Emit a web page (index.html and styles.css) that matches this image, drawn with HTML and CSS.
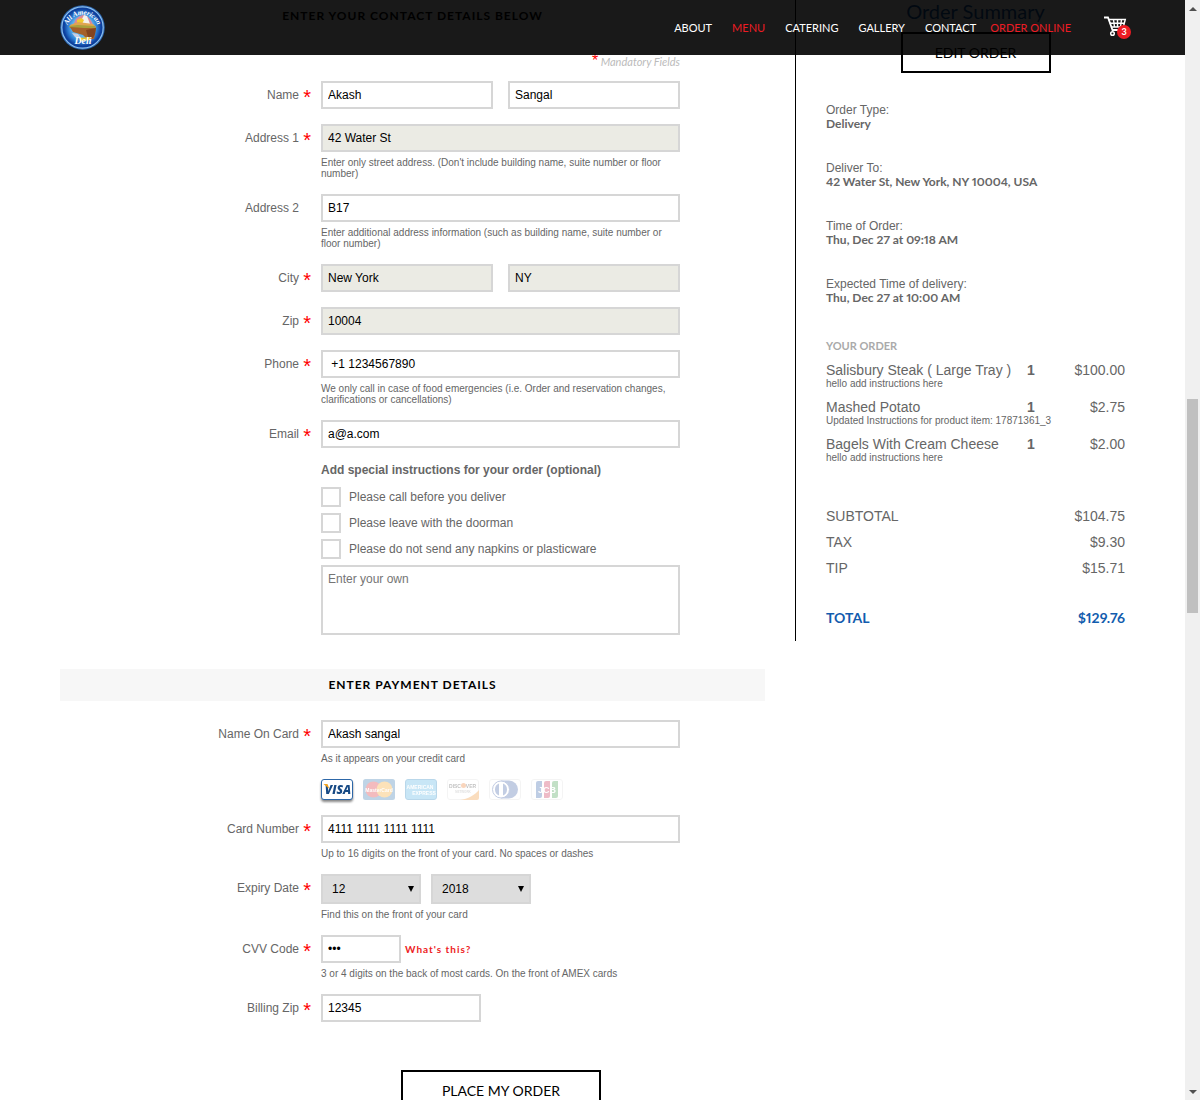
FILE: index.html
```html
<!DOCTYPE html>
<html lang="en">
<head>
<meta charset="utf-8">
<meta name="viewport" content="width=device-width, initial-scale=1">
<title>All American Deli - Checkout</title>
<link rel="stylesheet" href="styles.css">
</head>
<body>
<div class="window">
  <header class="topbar">
    <a class="logo" href="#" aria-label="All American Deli">
      <svg width="45" height="45" viewBox="0 0 45 45">
        <defs>
          <path id="arc-top" d="M7 25a15.500 15.500 0 0 1 31 0"/>
          <radialGradient id="ring"><stop offset=".5" stop-color="#5fb4ee"/><stop offset=".72" stop-color="#2a78cf"/><stop offset=".9" stop-color="#0d3f9c"/></radialGradient>
        </defs>
        <circle cx="22.500" cy="22.500" r="22.300" fill="#2b64ad"/>
        <circle cx="22.500" cy="22.500" r="20.700" fill="url(#ring)" stroke="#8cc0ee" stroke-width="1.200"/>
        <path d="M14 19c1-6 5-8 9-9 4 0 8 4 10 10z" fill="#d9899a"/>
        <path d="M21 16l3-6 3 1 3 8h-8z" fill="#f4f2ec"/>
        <path d="M17 15l4-2 3 2-2 4-5-1z" fill="#efc92f"/>
        <path d="M10 20l8-3 15 2 3 3-25 1z" fill="#e0a550"/>
        <path d="M9 21l9-1 17 1 1 2-12 1-14-1z" fill="#a8a03c"/>
        <path d="M10 22l14 1 12 0-1 6-1 5-7 0-4-4-10-3z" fill="#a5602b"/>
        <path d="M26 25l10-2-1 6-2 4-5-1z" fill="#84441f"/>
        <path d="M12 28l6 1 3 4-6-1z" fill="#c9cfe4"/>
        <path d="M19 33l11-1v3l-10 1z" fill="#e6c22c"/>
        <text class="logo-arc"><textPath href="#arc-top" startOffset="50%" text-anchor="middle">All American</textPath></text>
        <text class="logo-deli" x="23" y="39" text-anchor="middle">Deli</text>
      </svg>
    </a>
    <nav class="nav">
      <a href="#">ABOUT</a>
      <a class="active" href="#">MENU</a>
      <a href="#">CATERING</a>
      <a href="#">GALLERY</a>
      <a href="#">CONTACT</a>
      <a class="active order-online" href="#">ORDER ONLINE</a>
    </nav>
    <a class="cart" href="#" aria-label="Cart">
      <svg width="23" height="21" viewBox="0 0 23 21" fill="none" stroke="#fff">
        <path d="M0 1.500h4l4.500 12.500h11" stroke-width="1.800"/>
        <path d="M4.800 3.500h16.500l-2 7.500h-12M5.800 7.200h14.500" stroke-width="1.400"/>
        <path d="M9.500 3.500l1 7.500M13.500 3.500v7.500M17.500 3.500l-1 7.500" stroke-width="1.400"/>
        <circle cx="8.500" cy="17.500" r="1.800" stroke-width="1.500"/>
        <circle cx="17.500" cy="17.500" r="1.800" stroke-width="1.500"/>
      </svg>
      <span class="cart-count">3</span>
    </a>
  </header>

  <div class="page">
    <main class="checkout">
      <form>
        <h2 class="bar">ENTER YOUR CONTACT DETAILS BELOW</h2>
        <p class="mandatory"><span class="star">*</span> Mandatory Fields</p>
        <div class="rows">
          <div class="row">
            <label class="label" for="first">Name<span class="req">*</span></label>
            <div class="field pair">
              <input class="text" id="first" type="text" value="Akash">
              <input class="text" aria-label="Last name" type="text" value="Sangal">
            </div>
          </div>
          <div class="row">
            <label class="label" for="addr1">Address 1<span class="req">*</span></label>
            <div class="field">
              <input class="text locked" id="addr1" type="text" value="42 Water St" readonly>
              <p class="help">Enter only street address. (Don't include building name, suite number or floor number)</p>
            </div>
          </div>
          <div class="row">
            <label class="label" for="addr2">Address 2<span class="req"></span></label>
            <div class="field">
              <input class="text" id="addr2" type="text" value="B17">
              <p class="help">Enter additional address information (such as building name, suite number or floor number)</p>
            </div>
          </div>
          <div class="row">
            <label class="label" for="city">City<span class="req">*</span></label>
            <div class="field pair">
              <input class="text locked" id="city" type="text" value="New York" readonly>
              <input class="text locked" aria-label="State" type="text" value="NY" readonly>
            </div>
          </div>
          <div class="row">
            <label class="label" for="zip">Zip<span class="req">*</span></label>
            <div class="field"><input class="text locked" id="zip" type="text" value="10004" readonly></div>
          </div>
          <div class="row">
            <label class="label" for="phone">Phone<span class="req">*</span></label>
            <div class="field">
              <input class="text" id="phone" type="text" value=" +1 1234567890">
              <p class="help">We only call in case of food emergencies (i.e. Order and reservation changes, clarifications or cancellations)</p>
            </div>
          </div>
          <div class="row">
            <label class="label" for="email">Email<span class="req">*</span></label>
            <div class="field"><input class="text" id="email" type="text" value="a@a.com"></div>
          </div>
          <div class="row">
            <fieldset class="field extras">
              <legend>Add special instructions for your order (optional)</legend>
              <label class="check"><input type="checkbox">Please call before you deliver</label>
              <label class="check"><input type="checkbox">Please leave with the doorman</label>
              <label class="check"><input type="checkbox">Please do not send any napkins or plasticware</label>
              <textarea aria-label="Special instructions" placeholder="Enter your own"></textarea>
            </fieldset>
          </div>
        </div>

        <h2 class="bar payment">ENTER PAYMENT DETAILS</h2>
        <div class="rows">
          <div class="row">
            <label class="label" for="holder">Name On Card<span class="req">*</span></label>
            <div class="field">
              <input class="text" id="holder" type="text" value="Akash sangal">
              <p class="help">As it appears on your credit card</p>
            </div>
          </div>
          <div class="row">
            <div class="field cards">
              <svg class="card selected" viewBox="0 0 32 21" role="img" aria-label="Visa">
                <rect x=".5" y=".5" width="31" height="20" rx="2.500" fill="#fff" stroke="#2d67a8"/>
                <text class="visa" x="17" y="15" text-anchor="middle">VISA</text>
                <path d="M2.500 5h4l2 5z" fill="#f2a31f"/>
              </svg>
              <svg class="card" viewBox="0 0 32 21" role="img" aria-label="MasterCard">
                <rect width="32" height="21" rx="2.500" fill="#2d75ad"/>
                <circle cx="10.500" cy="10.500" r="8" fill="#d8232a"/><circle cx="21.500" cy="10.500" r="8" fill="#f6a01a"/>
                <text class="tiny" x="16" y="12.500" text-anchor="middle">MasterCard</text>
              </svg>
              <svg class="card" viewBox="0 0 32 21" role="img" aria-label="American Express">
                <rect x=".5" y=".5" width="31" height="20" rx="2.500" fill="#4db0e4" stroke="#1b7dbd"/>
                <text class="tiny" x="15" y="10" text-anchor="middle">AMERICAN</text>
                <text class="tiny" x="19" y="16" text-anchor="middle">EXPRESS</text>
              </svg>
              <svg class="card" viewBox="0 0 32 21" role="img" aria-label="Discover">
                <rect x=".5" y=".5" width="31" height="20" rx="2.500" fill="#fff" stroke="#ddd"/>
                <path d="M13 21c8-1 15-5 19-10v8a2 2 0 0 1-2 2z" fill="#f0902b"/>
                <circle cx="16.500" cy="6.500" r="2.500" fill="#ee7624"/>
                <text class="tiny dark" x="8" y="8.500" text-anchor="middle">DISC</text>
                <text class="tiny dark" x="24" y="8.500" text-anchor="middle">VER</text>
                <text class="micro" x="16" y="14" text-anchor="middle">NETWORK</text>
              </svg>
              <svg class="card" viewBox="0 0 32 21" role="img" aria-label="Diners Club">
                <rect x=".5" y=".5" width="31" height="20" rx="2.500" fill="#fff" stroke="#ddd"/>
                <path d="M12 1.500h8a9 9 0 0 1 0 18h-8z" fill="#3a5ba6"/>
                <circle cx="12" cy="10.500" r="8.500" fill="#fff" stroke="#3a5ba6"/>
                <path d="M10 4.500a6.500 6.500 0 0 0 0 12zM14 4.500a6.500 6.500 0 0 1 0 12z" fill="#3a5ba6"/>
              </svg>
              <svg class="card" viewBox="0 0 32 21" role="img" aria-label="JCB">
                <rect x=".5" y=".5" width="31" height="20" rx="2.500" fill="#fff" stroke="#ddd"/>
                <path d="M7 2h4v15a2 2 0 0 1-2 2H5V4a2 2 0 0 1 2-2z" fill="#2b5ba9"/>
                <path d="M15 2h4v15a2 2 0 0 1-2 2h-4V4a2 2 0 0 1 2-2z" fill="#c9234a"/>
                <path d="M23 2h4v15a2 2 0 0 1-2 2h-4V4a2 2 0 0 1 2-2z" fill="#3a9a46"/>
                <text class="jcb" x="16" y="13.500" text-anchor="middle">JCB</text>
              </svg>
            </div>
          </div>
          <div class="row">
            <label class="label" for="number">Card Number<span class="req">*</span></label>
            <div class="field">
              <input class="text" id="number" type="text" value="4111 1111 1111 1111">
              <p class="help">Up to 16 digits on the front of your card. No spaces or dashes</p>
            </div>
          </div>
          <div class="row">
            <label class="label" for="month">Expiry Date<span class="req">*</span></label>
            <div class="field">
              <div class="expiry">
                <div class="select">
                  <select id="month"><option>12</option></select>
                  <svg class="arrow" width="6" height="6" viewBox="0 0 6 6"><path d="M0 0h6L3 6z"/></svg>
                </div>
                <div class="select">
                  <select aria-label="Expiry year"><option>2018</option></select>
                  <svg class="arrow" width="6" height="6" viewBox="0 0 6 6"><path d="M0 0h6L3 6z"/></svg>
                </div>
              </div>
              <p class="help">Find this on the front of your card</p>
            </div>
          </div>
          <div class="row">
            <label class="label" for="cvv">CVV Code<span class="req">*</span></label>
            <div class="field">
              <div class="cvv">
                <input class="text" id="cvv" type="password" value="123">
                <a href="#">What's this?</a>
              </div>
              <p class="help">3 or 4 digits on the back of most cards. On the front of AMEX cards</p>
            </div>
          </div>
          <div class="row">
            <label class="label" for="bzip">Billing Zip<span class="req">*</span></label>
            <div class="field"><input class="text short" id="bzip" type="text" value="12345"></div>
          </div>
        </div>
        <div class="submit"><button class="outline wide" type="button">PLACE MY ORDER</button></div>
      </form>
    </main>

    <aside class="summary">
      <h2>Order Summary</h2>
      <button class="outline" type="button">EDIT ORDER</button>
      <dl class="facts">
        <div><dt>Order Type:</dt><dd>Delivery</dd></div>
        <div><dt>Deliver To:</dt><dd>42 Water St, New York, NY 10004, USA</dd></div>
        <div><dt>Time of Order:</dt><dd>Thu, Dec 27 at 09:18 AM</dd></div>
        <div><dt>Expected Time of delivery:</dt><dd>Thu, Dec 27 at 10:00 AM</dd></div>
      </dl>
      <h3>YOUR ORDER</h3>
      <table class="items">
        <colgroup><col><col class="qty-col"><col class="price-col"></colgroup>
        <tbody>
          <tr><td>Salisbury Steak ( Large Tray )<small>hello add instructions here</small></td><td class="qty">1</td><td class="price">$100.00</td></tr>
          <tr><td>Mashed Potato<small>Updated Instructions for product item: 17871361_3</small></td><td class="qty">1</td><td class="price">$2.75</td></tr>
          <tr><td>Bagels With Cream Cheese<small>hello add instructions here</small></td><td class="qty">1</td><td class="price">$2.00</td></tr>
        </tbody>
      </table>
      <table class="totals">
        <tbody>
          <tr><th scope="row">SUBTOTAL</th><td>$104.75</td></tr>
          <tr><th scope="row">TAX</th><td>$9.30</td></tr>
          <tr><th scope="row">TIP</th><td>$15.71</td></tr>
        </tbody>
      </table>
      <p class="grand"><span>TOTAL</span><span>$129.76</span></p>
    </aside>
  </div>

  <div class="rail" aria-hidden="true">
    <svg width="8" height="4" viewBox="0 0 8 4"><path d="M0 4l4-4 4 4z" fill="#505050"/></svg>
    <span class="thumb"></span>
    <svg class="down" width="8" height="4" viewBox="0 0 8 4"><path d="M0 0l4 4 4-4z" fill="#505050"/></svg>
  </div>
</div>
</body>
</html>
```

FILE: styles.css
```css
* { box-sizing: border-box; }

body, h2, h3, p, dl, dd, fieldset { margin: 0; padding: 0; }

body {
  background: #fff;
  color: #666;
  font: 12px/14px "Liberation Sans", Arial, sans-serif;
}

a { text-decoration: none; }

/* Page, fixed header and scroll rail share one grid */
.window {
  display: grid;
  grid-template: 55px minmax(0, 1fr) / minmax(0, 1fr) 15px;
  height: 100vh;
}

.page {
  grid-area: 1 / 1 / 3 / 2;
  display: flex;
  align-items: flex-start;
  gap: 30px;
  padding: 0 60px;
  overflow-y: auto;
  scrollbar-width: none;
}

.topbar {
  grid-area: 1 / 1 / 2 / 2;
  z-index: 1;
  display: flex;
  align-items: center;
  padding: 0 54px 0 60px;
  background: rgba(0, 0, 0, .9);
}

.logo { margin-right: auto; height: 45px; }
.logo svg { display: block; }
.logo-arc { font: italic bold 7px "Liberation Serif", serif; fill: #fff; }
.logo-deli { font: italic bold 10px "Liberation Serif", serif; fill: #fff; }

.nav {
  display: flex;
  gap: 20px;
  font: 11px/14px Lato, sans-serif;
}
.nav a { color: #fff; }
.nav .active { color: #ed1c24; }
.nav .order-online { margin-left: -6px; }

.cart {
  position: relative;
  width: 27px;
  height: 23px;
  margin-left: 33px;
}
.cart svg { display: block; }
.cart-count {
  position: absolute;
  right: 0;
  bottom: 0;
  width: 14px;
  height: 14px;
  border-radius: 7px;
  background: #ed1c24;
  color: #fff;
  font: bold 9px/14px Lato, sans-serif;
  text-align: center;
}

/* Checkout form */
.checkout { flex: 1; min-width: 0; padding-bottom: 60px; }

.bar {
  background: #f7f7f7;
  color: #000;
  font: bold 12px/32px Lato, sans-serif;
  letter-spacing: 1px;
  text-align: center;
}
.payment { margin: 34px 0 19px; }

.mandatory {
  margin: 23px 85px 12px 0;
  color: #bbb;
  font: italic 11px/14px Lato, sans-serif;
  text-align: right;
}
.star { color: #f00; font: 16px/10px "Liberation Sans", Arial, sans-serif; }

.rows { display: grid; gap: 15px; padding-right: 85px; }

.row {
  display: grid;
  grid-template-columns: 251px minmax(0, 1fr);
  column-gap: 10px;
}
.field { grid-column: 2; min-width: 0; }

.label {
  display: flex;
  justify-content: flex-end;
  line-height: 28px;
}
.req {
  width: 12px;
  height: 28px;
  padding-top: 2px;
  color: #f00;
  font-size: 20px;
  line-height: 28px;
  text-align: right;
}

.text {
  display: block;
  width: 100%;
  height: 28px;
  padding: 0 5px;
  border: 2px solid #d6d6d6;
  border-radius: 0;
  background: #fff;
  color: #000;
  font: inherit;
}
.locked { background: #ebebe4; }
.short { width: 160px; }

.pair { display: grid; grid-template-columns: 1fr 1fr; gap: 15px; }

.help { margin-top: 5px; font-size: 10px; line-height: 11px; }

.extras { border: 0; }
.extras legend { padding: 0; margin-bottom: 10px; font-weight: bold; }

.check {
  display: flex;
  align-items: center;
  gap: 8px;
  margin-bottom: 6px;
}
.check input {
  appearance: none;
  width: 20px;
  height: 20px;
  margin: 0;
  border: 2px solid #d6d6d6;
  background: #fff;
}
.extras textarea {
  display: block;
  width: 100%;
  height: 70px;
  padding: 5px;
  border: 2px solid #d6d6d6;
  font: inherit;
  resize: none;
}

.cards { display: flex; gap: 10px; }
.card { width: 32px; height: 21px; opacity: .3; }
.selected { opacity: 1; overflow: visible; filter: drop-shadow(0 2px 1px #888); }
.card text { font-family: "Liberation Sans", Arial, sans-serif; font-weight: bold; }
.card .visa { font: italic 800 12px "Open Sans", sans-serif; fill: #174a85; }
.tiny { font-size: 5px; fill: #fff; }
.micro { font-size: 3px; fill: #999; }
.jcb { font-size: 9px; fill: #fff; }
.card .dark { fill: #333; }

.expiry { display: flex; gap: 10px; }
.select { position: relative; width: 100px; }
.select select {
  display: block;
  appearance: none;
  width: 100%;
  height: 30px;
  padding: 0 9px;
  border: 2px solid #d6d6d6;
  border-radius: 0;
  background: #ddd;
  color: #000;
  font: inherit;
}
.arrow { position: absolute; top: 12px; right: 7px; pointer-events: none; }

.cvv { display: flex; align-items: center; gap: 4px; }
.cvv .text { width: 80px; }
.cvv a {
  color: #ed1c24;
  font: bold 10px/14px Lato, sans-serif;
  letter-spacing: 1px;
}

.submit { margin-top: 48px; padding-left: 341px; }

.outline {
  width: 150px;
  height: 41px;
  border: 2px solid #000;
  background: none;
  color: #000;
  font: 14px/16px Lato, sans-serif;
}
.wide { width: 200px; }

/* Order summary */
.summary {
  width: 330px;
  flex: none;
  padding: 0 0 15px 30px;
  border-left: 1px solid #000;
}
.summary h2 {
  margin-bottom: 10px;
  color: #125cae;
  font: 20px/22px Lato, sans-serif;
  text-align: center;
}
.summary .outline { display: block; margin: 0 auto 30px; }

.facts { display: grid; gap: 30px; }
.facts dd {
  font: bold 12px/14px Lato, sans-serif;
  font-variant-numeric: proportional-nums;
}

.summary h3 {
  margin: 34px 0 9px;
  color: #aaa;
  font: bold 11px/14px Lato, sans-serif;
}

.items, .totals {
  width: 100%;
  border-collapse: collapse;
  font-size: 14px;
  line-height: 16px;
}
.items { table-layout: fixed; }
.qty-col { width: 30px; }
.price-col { width: 68px; }
.items td { padding: 0 0 10px; vertical-align: top; white-space: nowrap; }
.items small { display: block; font-size: 10px; line-height: 11px; }
.items .qty { font-weight: bold; }
.items .price, .totals td { text-align: right; }

.totals { margin-top: 30px; }
.totals th, .totals td { padding: 5px 0; font-weight: normal; text-align: left; }
.totals td { text-align: right; }

.grand {
  display: flex;
  justify-content: space-between;
  margin-top: 29px;
  color: #125cae;
  font: bold 14px/16px Lato, sans-serif;
  font-variant-numeric: proportional-nums;
}

/* Scroll rail */
.rail {
  grid-area: 1 / 2 / 3 / 3;
  display: grid;
  grid-template-rows: 17px 382fr 214fr 470fr 17px;
  justify-items: center;
  align-items: center;
  background: #f0f0f0;
}
.thumb { grid-row: 3; width: 11px; height: 100%; background: #c0c0c0; }
.down { grid-row: 5; }
```
